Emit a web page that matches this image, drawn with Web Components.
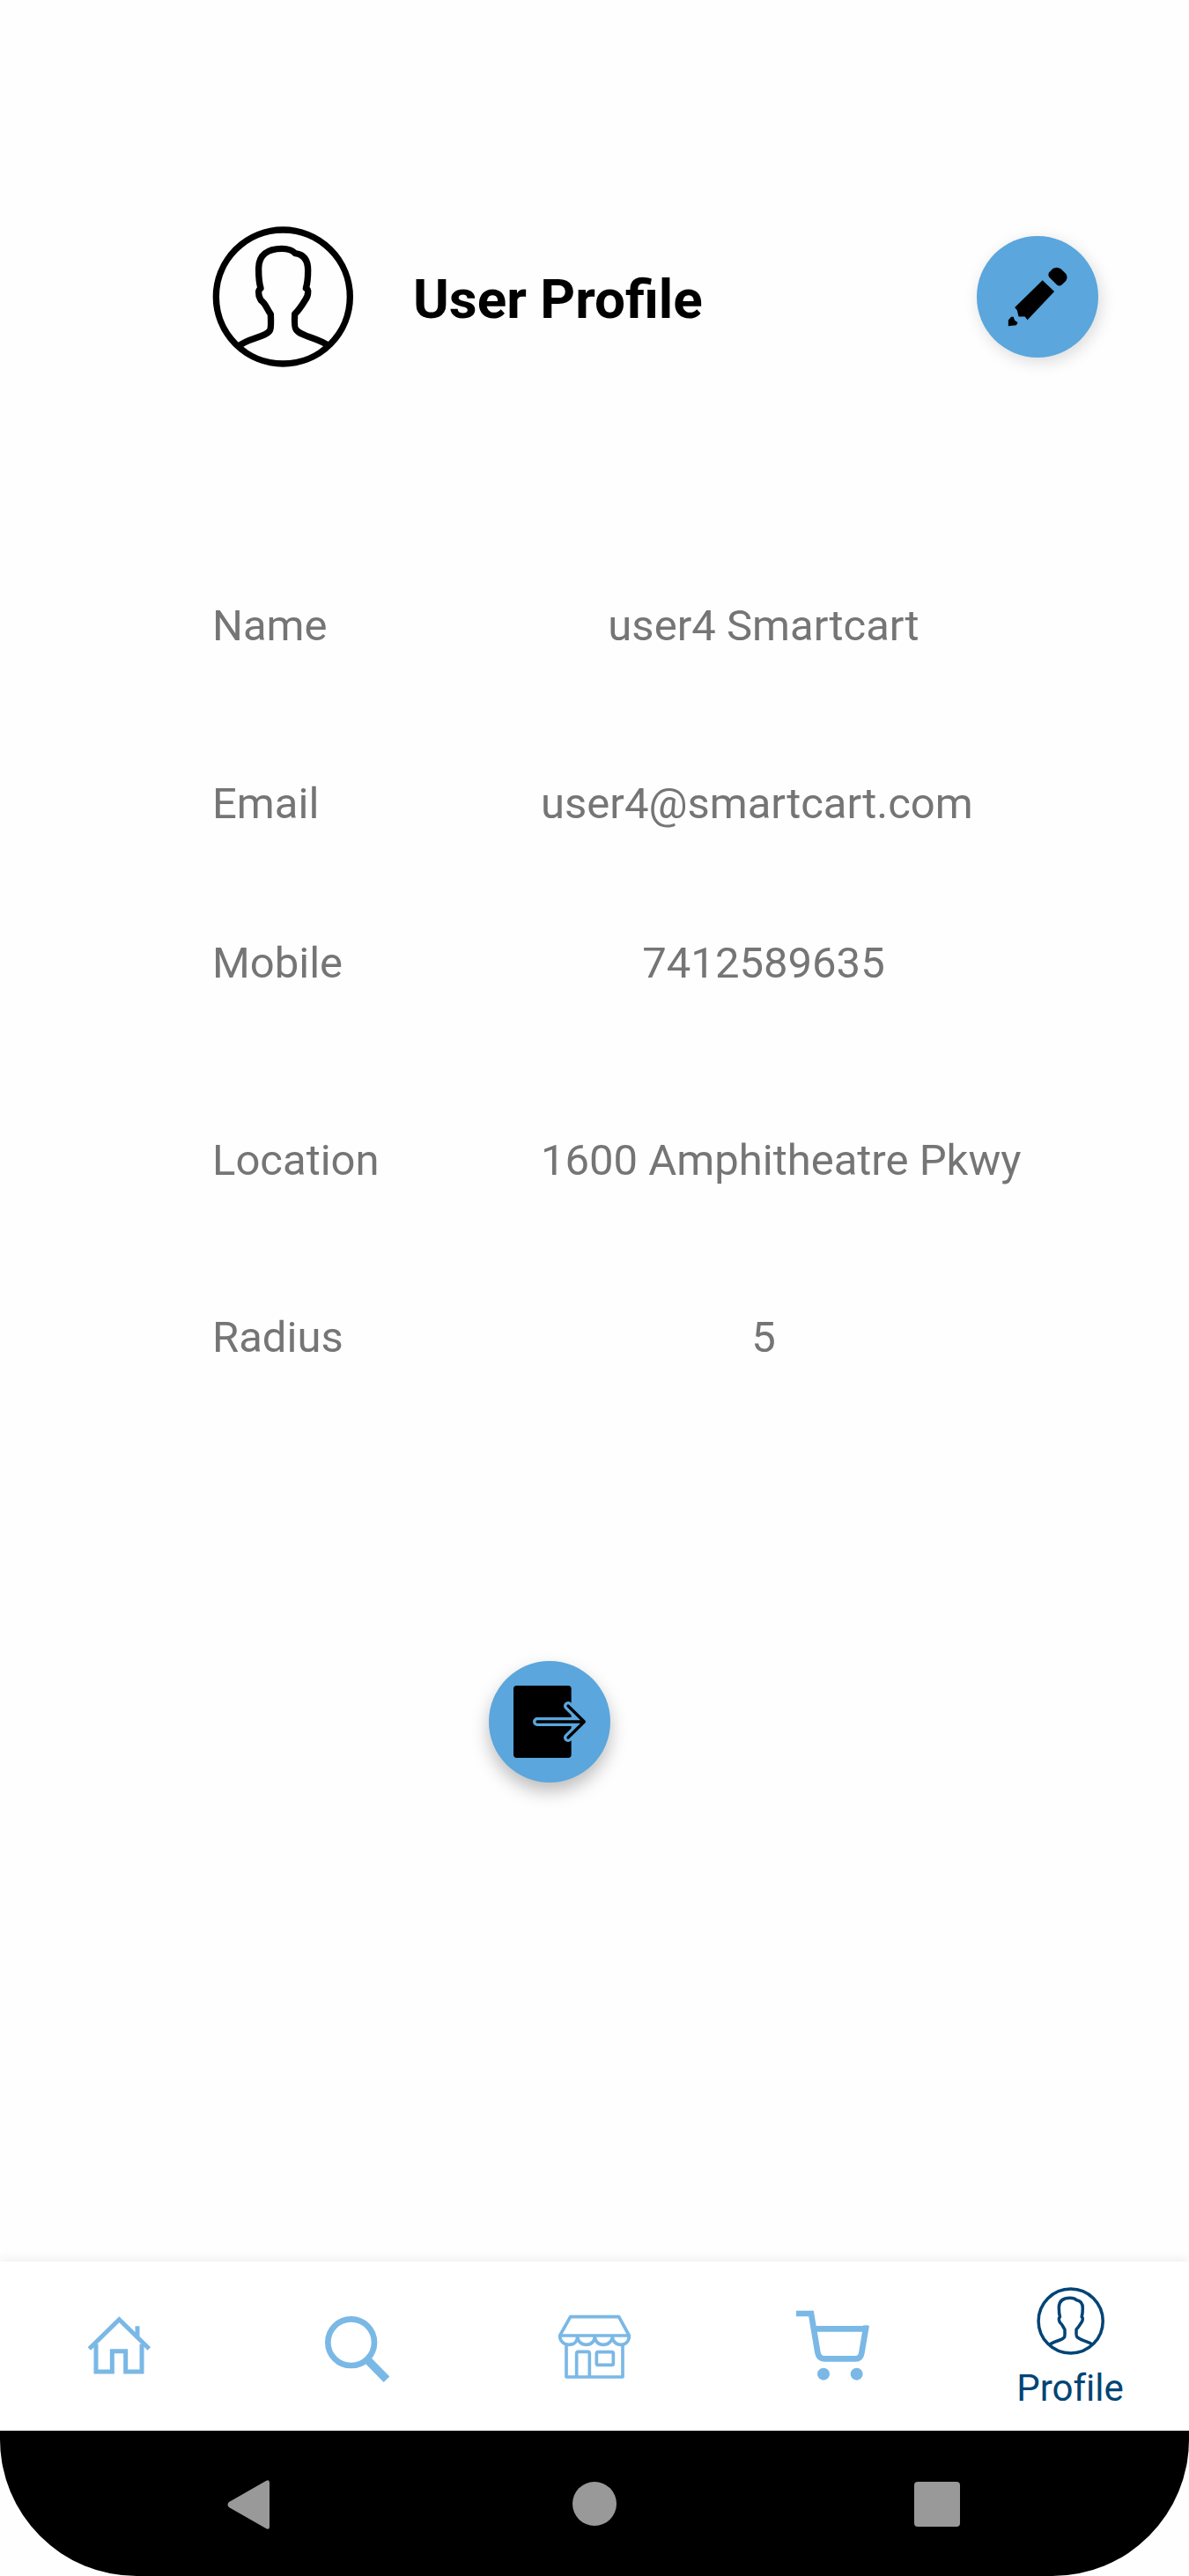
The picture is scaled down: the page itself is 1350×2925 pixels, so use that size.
<!DOCTYPE html>
<html lang="en">
<head>
<meta charset="utf-8">
<meta name="viewport" content="width=device-width, initial-scale=1">
<title>User Profile</title>
<style>
  body { margin: 0; background: #fefefe; font-family: Roboto, "Liberation Sans", sans-serif; }
</style>
</head>
<body>
<profile-app></profile-app>

<script>
const define = (name, html) => {
  const template = document.createElement('template');
  template.innerHTML = html;
  customElements.define(name, class extends HTMLElement {
    constructor() {
      super();
      this.attachShadow({ mode: 'open' }).append(template.content.cloneNode(true));
    }
    connectedCallback() {
      const control = this.shadowRoot.querySelector('[data-control]');
      if (control && this.hasAttribute('label')) control.setAttribute('aria-label', this.getAttribute('label'));
    }
  });
};

define('user-avatar', `
  <style>
    :host { display: block; flex: none; width: 160px; height: 160px; }
    svg { display: block; width: 100%; height: 100%; }
  </style>
  <svg viewBox="63 51 480 480" fill="none" stroke="currentColor" stroke-width="22" stroke-linejoin="round" aria-hidden="true">
    <circle cx="304" cy="291" r="228"/>
    <path d="M152 460C186 430 246 430 260 404Q264 396 262 350C248 332 246 315 229 303C223 292 220 288 221 276Q221 266 228 262C220 235 221 215 221 192C222 150 250 127 300 127C322 127 336 132 346 143C374 147 389 165 389 200C389 222 388 242 382 262Q390 266 389 276C389 288 386 294 379 303C370 318 358 336 344 350Q342 396 348 402C364 427 424 430 462 460"/>
  </svg>`);

define('round-button', `
  <style>
    :host { display: block; flex: none; }
    button { display: block; width: 138px; height: 138px; padding: 0; border: 0; border-radius: 50%;
      background: #5aa6dd; color: #000; cursor: pointer; box-shadow: var(--fab-shadow, 0 6px 18px rgba(0,0,0,.2)); }
    ::slotted(svg) { display: block; width: 100%; height: 100%; }
  </style>
  <button type="button" data-control><slot></slot></button>`);

define('profile-header', `
  <style>
    :host { display: flex; align-items: center; padding: 257px 103px 0 241px; }
    h1 { margin: 0 auto 0 68px; padding-top: 6px; font-size: 62px; line-height: 72px; font-weight: 700; color: #000; white-space: nowrap; }
    round-button { --fab-shadow: 3px 5px 18px rgba(0,0,0,.14); }
  </style>
  <user-avatar></user-avatar>
  <h1><slot></slot></h1>
  <round-button label="Edit profile">
    <svg viewBox="86 86 412 412" aria-hidden="true">
      <path d="M343 197Q357 188 371 197L388 214Q396 226 388 238L374 252Q366 258 358 252L331 225Q326 218 331 210Z"/>
      <path d="M309 236L349 274L258 370L249 359L228 359L223 338L215 328Z"/>
      <path d="M203 360L210 360L215 372L225 379L220 388L193 391L193 371Z"/>
    </svg>
  </round-button>`);

define('profile-field', `
  <style>
    :host { display: grid; grid-template-columns: 373px 506px; font-size: 49px; line-height: 60px; color: #757575; white-space: nowrap; }
    .value { text-align: center; }
    :host([long]) .value { text-align: start; }
  </style>
  <span class="label"><slot name="label"></slot></span>
  <span class="value"><slot></slot></span>`);

define('profile-fields', `
  <style>
    :host { display: grid; grid-template-rows: 202px 181px 224px 201px 60px; padding: 264px 0 0 241px; }
  </style>
  <slot></slot>`);

define('nav-item', `
  <style>
    :host { display: block; flex: 1; }
    a { display: flex; flex-direction: column; align-items: center; justify-content: center; gap: 14px;
      box-sizing: border-box; height: 192px; padding-top: 4px; color: #7ab8e6; text-decoration: none;
      font-size: 42px; line-height: 48px; font-variant-ligatures: none; }
    :host([selected]) a { color: #004475; }
    ::slotted(svg) { display: block; width: 130px; height: 130px; }
    ::slotted(user-avatar) { width: 77px; height: 77px; }
  </style>
  <a href="#" data-control><slot name="icon"></slot><slot></slot></a>`);

define('bottom-nav', `
  <style>
    :host { display: block; background: #fff; box-shadow: 0 -2px 12px rgba(0,0,0,.07); }
    nav { display: flex; }
  </style>
  <nav aria-label="Main"><slot></slot></nav>`);

define('system-bar', `
  <style>
    :host { display: grid; grid-template-columns: repeat(3, 1fr); justify-items: center; align-items: center;
      box-sizing: border-box; height: 165px; padding: 0 91px; background: #000; border-radius: 0 0 155px 155px; }
    button { padding: 0; border: 0; background: none; color: #999; }
    svg { display: block; width: 60px; height: 60px; }
  </style>
  <button type="button" aria-label="Back"><svg viewBox="0 0 60 60" fill="currentColor"><path d="M4 28Q1 31 4 34L46 58Q50 60 50 56V6Q50 2 46 4Z"/></svg></button>
  <button type="button" aria-label="Home"><svg viewBox="0 0 60 60" fill="currentColor"><circle cx="30" cy="30" r="25"/></svg></button>
  <button type="button" aria-label="Overview"><svg viewBox="0 0 60 60" fill="currentColor"><rect x="4" y="5" width="52" height="51" rx="4"/></svg></button>`);

define('profile-app', `
  <style>
    :host { display: flex; flex-direction: column; min-height: 100vh; }
    main { flex: 1; }
    .logout { display: flex; padding: 337px 0 60px 41.1%; }
    .logout round-button { --fab-shadow: 0 10px 20px rgba(0,0,0,.26); }
  </style>
  <main>
    <profile-header>User Profile</profile-header>
    <profile-fields>
      <profile-field><span slot="label">Name</span>user4 Smartcart</profile-field>
      <profile-field long><span slot="label">Email</span>user4@smartcart.com</profile-field>
      <profile-field><span slot="label">Mobile</span>7412589635</profile-field>
      <profile-field long><span slot="label">Location</span>1600 Amphitheatre Pkwy</profile-field>
      <profile-field><span slot="label">Radius</span>5</profile-field>
    </profile-fields>
    <div class="logout">
      <round-button label="Log out">
        <svg viewBox="75 78 414 414" fill="none" stroke-linecap="round" stroke-linejoin="round" aria-hidden="true">
          <rect x="159" y="162" width="197" height="246" rx="11" fill="#000"/>
          <path d="M240 285H398M345 231L400 285L345 339" stroke="#5aa6dd" stroke-width="30"/>
          <path d="M240 285H398M345 231L400 285L345 339" stroke="#000" stroke-width="10"/>
        </svg>
      </round-button>
    </div>
  </main>
  <bottom-nav>
    <nav-item label="Home">
      <svg slot="icon" viewBox="-30 0 390 390" fill="none" stroke="currentColor" stroke-width="15" aria-hidden="true">
        <path d="M64 198L166 98L268 198M87 182V276H142V206H188V276H243V182M228 158V121"/>
      </svg>
    </nav-item>
    <nav-item label="Search">
      <svg slot="icon" viewBox="0 0 390 390" fill="none" stroke="currentColor" aria-hidden="true">
        <circle cx="176" cy="176" r="79" stroke-width="20"/>
        <path d="M230 234L297 302" stroke-width="28"/>
      </svg>
    </nav-item>
    <nav-item label="Stores">
      <svg slot="icon" viewBox="0 0 390 390" fill="none" stroke="currentColor" stroke-width="11" stroke-linejoin="round" aria-hidden="true">
        <path d="M113 89H278L313 153H77Z"/>
        <path d="M77 153C77 172 90 184 108 184S137 172 137 155C137 172 150 184 167 184S196 172 196 155C196 172 208 184 225 184S256 172 256 155C256 172 268 184 285 184S313 172 313 153"/>
        <path d="M99 184V294H291V184"/>
        <path d="M134 292V214Q134 208 140 208H172Q178 208 178 214V292"/>
        <rect x="202" y="209" width="57" height="44" rx="5"/>
      </svg>
    </nav-item>
    <nav-item label="Cart">
      <svg slot="icon" viewBox="0 0 390 390" fill="none" stroke="currentColor" stroke-width="20" aria-hidden="true">
        <path d="M72 78H123L145 210Q149 232 168 232H274Q292 232 295 212L309 130H137"/>
        <path d="M300 128H318"/>
        <circle cx="165" cy="284" r="21" fill="currentColor" stroke="none"/>
        <circle cx="278" cy="284" r="21" fill="currentColor" stroke="none"/>
      </svg>
    </nav-item>
    <nav-item selected>
      <user-avatar slot="icon"></user-avatar>
      Profile
    </nav-item>
  </bottom-nav>
  <system-bar></system-bar>`);
</script>
</body>
</html>
